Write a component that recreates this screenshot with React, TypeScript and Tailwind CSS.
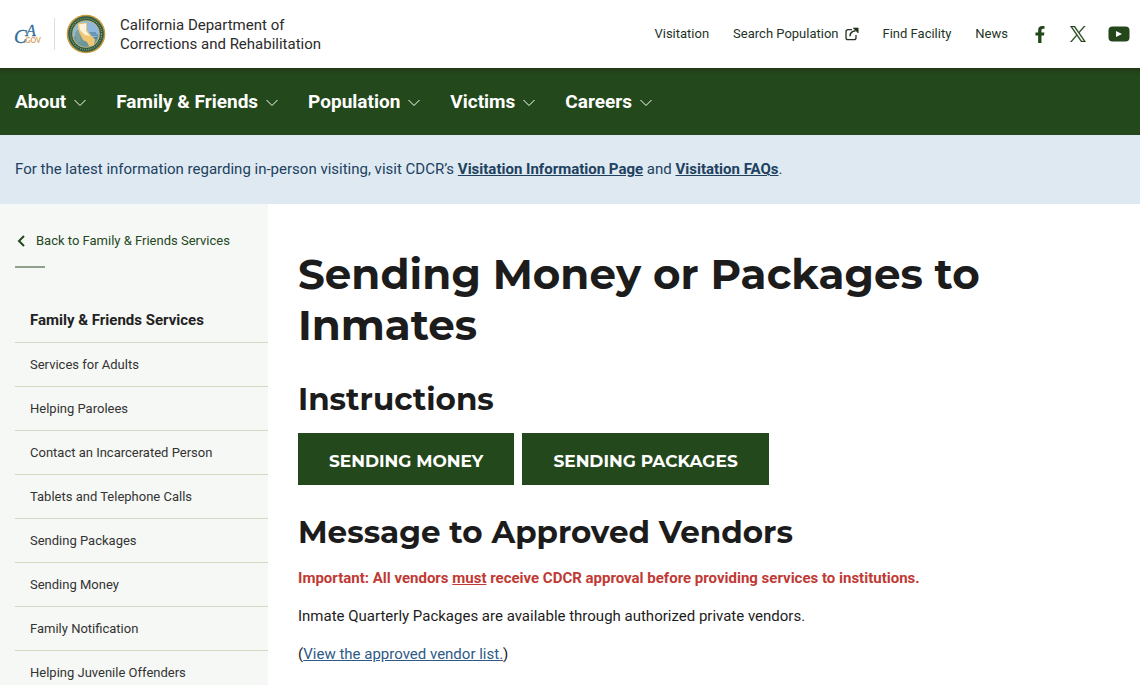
import { FaFacebookF } from "react-icons/fa";

const topLinks = [
  { label: "Visitation" },
  { label: "Search Population", external: true },
  { label: "Find Facility" },
  { label: "News" },
];

const navItems = ["About", "Family & Friends", "Population", "Victims", "Careers"];

const sideLinks = [
  "Services for Adults",
  "Helping Parolees",
  "Contact an Incarcerated Person",
  "Tablets and Telephone Calls",
  "Sending Packages",
  "Sending Money",
  "Family Notification",
  "Helping Juvenile Offenders",
];

function CaGovLogo() {
  return (
    <svg width="30" height="28" viewBox="0 0 30 28" role="img" aria-label="CA.gov">
      <g fontFamily="'Liberation Serif', serif" fontStyle="italic" fill="#2f6c9c" stroke="#2f6c9c" strokeWidth="0.3">
        <text x="0" y="23" fontSize="19">C</text>
        <text x="12" y="16" fontSize="16">A</text>
      </g>
      <text x="10" y="23" fontSize="7" fontFamily="Lato, sans-serif" fontWeight="700" fill="#d5a05c">
        .GOV
      </text>
    </svg>
  );
}

function Seal() {
  return (
    <svg width="40" height="40" viewBox="0 0 40 40" aria-hidden="true">
      <circle cx="20" cy="20" r="19.3" fill="#c39a3f" />
      <circle cx="20" cy="20" r="17.8" fill="#2f5a43" />
      <circle cx="20" cy="20" r="15.6" fill="none" stroke="#8f9f6c" strokeWidth="1.4" strokeDasharray="1 1.1" />
      <circle cx="20" cy="20" r="13.8" fill="#d8bb6c" />
      <circle cx="20" cy="20" r="13.1" fill="#8fb9dc" />
      <path d="M7.500 23Q13 18 18 22T32.500 22Q31 32 20 33Q10 32 7.500 23Z" fill="#6f9696" />
      <path d="M9 19l3-4 2 5 1 8-4 1z" fill="#7f9f9c" />
      <path d="M23 19h7M24 21h8M26 24h5" stroke="#3f7291" strokeWidth="1" />
      <path d="M12 9.500l9-1v8l8 9-1 6-5 .5-2-4-4-2-3-6-2-5z" fill="#efc673" />
      <path d="M13 10.300l7-.8v7.500l4 5-5-1-5-5z" fill="#fbf3de" />
    </svg>
  );
}

function ExternalIcon() {
  return (
    <svg className="size-3.5" viewBox="0 0 14 14" fill="none" stroke="currentColor" strokeWidth="1.3" aria-hidden="true">
      <path d="M7 2.700H3A2 2 0 0 0 1 4.700v6a2 2 0 0 0 2 2h6a2 2 0 0 0 2-2V8" />
      <path d="M5 9.200c0-3 2-5 5.500-5.500" strokeWidth="1.5" />
      <path d="M8.200 1h5v5z" fill="currentColor" strokeWidth="0.6" />
    </svg>
  );
}

function XIcon() {
  return (
    <svg className="size-4" viewBox="0 0 24 24" fill="currentColor" stroke="currentColor" strokeWidth="0.5" aria-hidden="true">
      <path d="M14.234 10.162 22.977 0h-2.072l-7.591 8.824L7.251 0H.258l9.168 13.343L.258 24H2.330l8.016-9.318L16.749 24h6.993zm-2.837 3.299-.929-1.329L3.076 1.560h3.182l5.965 8.532.929 1.329 7.754 11.090h-3.182z" />
    </svg>
  );
}

function YoutubeIcon() {
  return (
    <svg width="22" height="16" viewBox="0 0 22 16" aria-hidden="true">
      <rect x="0.500" y="0.500" width="21" height="15" rx="4" fill="currentColor" />
      <path d="M8 5v6l6-3z" fill="#fff" />
    </svg>
  );
}

function NavChevron() {
  return (
    <svg className="h-2 w-3" viewBox="0 0 12 8" fill="none" stroke="currentColor" strokeWidth="1" aria-hidden="true">
      <path d="M0.500 1 6 6.500 11.500 1" />
    </svg>
  );
}

function Header() {
  return (
    <header className="flex h-17 items-center justify-between pr-2.5 pl-3.5">
      <a href="#" className="flex items-center">
        <CaGovLogo />
        <span className="ml-2.5 h-8 w-px bg-[#dedede]" />
        <span className="ml-[11px]">
          <Seal />
        </span>
        <span className="ml-3.5 pt-0.5 text-[15px] leading-[19px] text-[#2b2b2b]">
          California Department of
          <br />
          Corrections and Rehabilitation
        </span>
      </a>
      <nav aria-label="Utility" className="flex items-center gap-6 text-[13px] text-[#24331f]">
        {topLinks.map((link) => (
          <a key={link.label} href="#" className="flex items-center gap-1.5">
            {link.label}
            {link.external && <ExternalIcon />}
          </a>
        ))}
        <div className="flex items-center gap-[22px] text-[#23461b]">
          <a href="#" aria-label="Facebook" className="flex w-4 justify-center">
            <FaFacebookF size={17} />
          </a>
          <a href="#" aria-label="X">
            <XIcon />
          </a>
          <a href="#" aria-label="YouTube">
            <YoutubeIcon />
          </a>
        </div>
      </nav>
    </header>
  );
}

function MainNav() {
  return (
    <nav
      aria-label="Main"
      className="flex h-[67px] items-center gap-[30px] bg-[#23481b] bg-linear-to-b from-[#22391a] to-[#23481b] to-10% px-[15px] pt-0.5"
    >
      {navItems.map((item) => (
        <button key={item} type="button" className="flex items-center gap-2 text-[19px] font-bold text-white">
          {item}
          <NavChevron />
        </button>
      ))}
    </nav>
  );
}

function Sidebar() {
  return (
    <aside className="w-[268px] shrink-0 bg-[#f6f8f5] pt-[27px] pl-[15px]">
      <a href="#" className="flex h-5 items-center gap-[11px] text-[13px] text-[#24471c]">
        <svg className="ml-0.5 h-3 w-2" viewBox="0 0 8 12" fill="none" stroke="currentColor" strokeWidth="2" aria-hidden="true">
          <path d="M7 1 2 6l5 5" />
        </svg>
        Back to Family &amp; Friends Services
      </a>
      <div className="mt-[15px] h-0.5 w-[30px] bg-[#91a18d]" />
      <h2 className="mt-[30px] flex h-[45px] items-center border-b border-[#d2dac3] pl-[15px] text-[15px] font-bold text-[#222]">
        Family &amp; Friends Services
      </h2>
      <ul>
        {sideLinks.map((label) => (
          <li key={label} className="border-b border-[#d2dac3]">
            <a href="#" className="flex h-[43px] items-center pl-[15px] text-[13px] text-[#333]">
              {label}
            </a>
          </li>
        ))}
      </ul>
    </aside>
  );
}

const heading = "font-[Montserrat,Inter,sans-serif] font-bold text-[#1c1c1c]";
const action =
  "flex h-[52px] items-center bg-[#23481b] px-[31px] pt-1 font-[Montserrat,Inter,sans-serif] text-[17px] font-bold text-white";

export default function App() {
  return (
    <div className="min-h-screen bg-white font-[Roboto,sans-serif]">
      <Header />
      <MainNav />
      <div className="flex min-h-[69px] items-center bg-[#dfe9f2] px-[15px] text-[15px] text-[#20415f]">
        <p>
          For the latest information regarding in-person visiting, visit CDCR’s{" "}
          <a href="#" className="font-bold underline">Visitation Information Page</a> and{" "}
          <a href="#" className="font-bold underline">Visitation FAQs</a>.
        </p>
      </div>
      <div className="flex">
        <Sidebar />
        <main className="min-w-0 flex-1 px-[30px] pt-[45px] text-[15px] leading-6 text-[#1c1c1c]">
          <h1 className={`${heading} max-w-[720px] text-[42px] leading-[51px]`}>
            Sending Money or Packages to Inmates
          </h1>
          <h2 className={`${heading} mt-[29px] text-[31px] leading-[38px]`}>Instructions</h2>
          <div className="mt-[15px] flex gap-2">
            <a href="#" className={action}>SENDING MONEY</a>
            <a href="#" className={action}>SENDING PACKAGES</a>
          </div>
          <h2 className={`${heading} mt-7 text-[31px] leading-[38px]`}>Message to Approved Vendors</h2>
          <div className="mt-[15px] flex flex-col gap-3.5">
            <p className="font-bold text-[#c03a35]">
              Important: All vendors <span className="underline">must</span> receive CDCR approval before
              providing services to institutions.
            </p>
            <p>Inmate Quarterly Packages are available through authorized private vendors.</p>
            <p>
              (<a href="#" className="text-[#2f5a85] underline">View the approved vendor list.</a>)
            </p>
          </div>
        </main>
      </div>
    </div>
  );
}
